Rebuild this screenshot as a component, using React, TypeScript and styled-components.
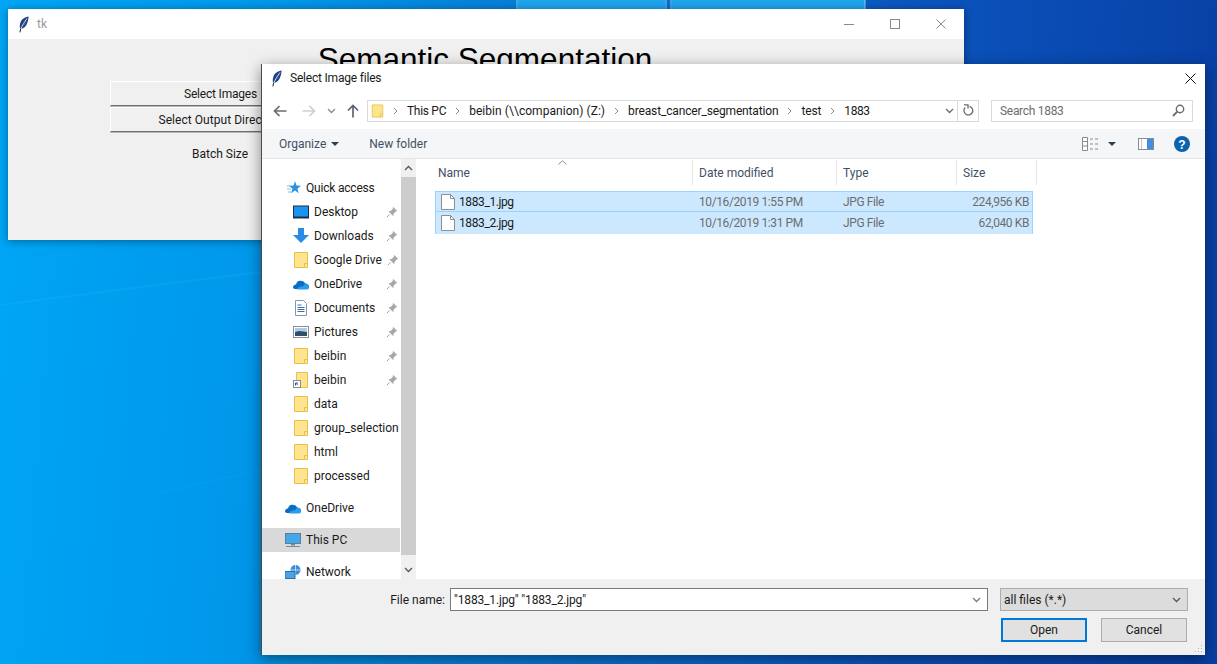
import React from "react";
import styled, { createGlobalStyle } from "styled-components";

const GlobalStyle = createGlobalStyle`
  html, body {
    margin: 0;
    padding: 0;
    overflow: hidden;
  }
  * {
    box-sizing: border-box;
  }
`;

const color = {
  text: "#1a1a1a",
  muted: "#6d6d6d",
  slate: "#3f4f66",
  folder: "#fde48f",
  folderEdge: "#e8c04e",
  blue: "#2a8ae6",
};

const Desktop = styled.div`
  position: relative;
  width: 1217px;
  height: 664px;
  overflow: hidden;
  font-family: "Roboto", "Open Sans", sans-serif;
  font-size: 12px;
  color: ${color.text};
  background: linear-gradient(
    95deg,
    #00a6f6 0%,
    #0098ea 21%,
    #0a72cf 50%,
    #0a52bb 75%,
    #083ea2 100%
  );
`;

const Wallpaper = styled.svg`
  position: absolute;
  left: 0;
  top: 0;
`;

const TkWindow = styled.div`
  position: absolute;
  left: 8px;
  top: 9px;
  width: 956px;
  height: 231px;
  background: #f0f0f0;
  box-shadow: 0 1px 8px rgba(0, 0, 0, 0.4);
  display: flex;
  flex-direction: column;
`;

const TkTitleBar = styled.div`
  height: 30px;
  flex: none;
  background: #fff;
  display: flex;
  align-items: center;
  padding-left: 10px;
`;

const TkCaption = styled.span`
  margin-left: 7px;
  color: #9a9a9a;
`;

const WindowControls = styled.div`
  margin-left: auto;
  display: flex;
`;

const WindowControl = styled.div`
  width: 46px;
  height: 30px;
  display: flex;
  align-items: center;
  justify-content: center;
`;

const TkBody = styled.div`
  flex: 1;
  display: flex;
  flex-direction: column;
`;

const TkHeading = styled.div`
  height: 42px;
  padding: 4px 2px 0 0;
  text-align: center;
  font-family: "Liberation Sans", sans-serif;
  font-size: 31.5px;
  line-height: 33px;
  color: #000;
  white-space: nowrap;
`;

const TkButton = styled.div<{ $tracking: number }>`
  width: 220px;
  height: 25px;
  margin-left: 102px;
  margin-bottom: 1px;
  display: flex;
  align-items: center;
  justify-content: center;
  white-space: nowrap;
  letter-spacing: ${(p) => p.$tracking}px;
  background: #f0f0f0;
  border-top: 1px solid #fff;
  border-left: 1px solid #fff;
  border-bottom: 1px solid #6e6e6e;
  box-shadow: 0 1px 0 #b8b8b8;
`;

const TkLabel = styled.div`
  width: 220px;
  margin-left: 102px;
  margin-top: 14px;
  text-align: center;
`;

const Dialog = styled.div`
  position: absolute;
  left: 261px;
  top: 64px;
  width: 944px;
  height: 591px;
  background: #fff;
  border-left: 1px solid #4a4a4a;
  box-shadow: 0 4px 14px rgba(0, 0, 0, 0.45);
  display: flex;
  flex-direction: column;
`;

const DialogTitleBar = styled.div`
  height: 28px;
  flex: none;
  display: flex;
  align-items: center;
  padding-left: 9px;
`;

const DialogCaption = styled.span`
  margin-left: 7px;
  letter-spacing: -0.2px;
`;

const CloseButton = styled.div`
  margin-left: auto;
  margin-right: 9px;
  display: flex;
`;

const NavBar = styled.div`
  height: 37px;
  flex: none;
  display: flex;
  align-items: center;
  padding-right: 12px;
`;

const NavButtons = styled.div`
  width: 105px;
  flex: none;
  display: flex;
  align-items: center;
`;

const NavButton = styled.div<{ $width: number }>`
  width: ${(p) => p.$width}px;
  flex: none;
  display: flex;
  justify-content: center;
`;

const AddressBar = styled.div`
  width: 612px;
  height: 22px;
  flex: none;
  border: 1px solid #d9d9d9;
  display: flex;
  align-items: center;
  padding-left: 3px;
`;

const AddressFolder = styled.span`
  width: 13px;
  flex: none;
  display: flex;
`;

const Crumb = styled.span<{ $tracking: number }>`
  white-space: nowrap;
  letter-spacing: ${(p) => p.$tracking}px;
`;

const CrumbSep = styled.span`
  display: flex;
  justify-content: center;
  width: 23px;
  flex: none;
`;

const AddressTail = styled.div`
  margin-left: auto;
  height: 100%;
  display: flex;
  align-items: center;
`;

const RefreshBox = styled.div`
  width: 21px;
  height: 100%;
  margin-left: 3px;
  border-left: 1px solid #d9d9d9;
  display: flex;
  align-items: center;
  justify-content: center;
`;

const SearchBox = styled.div`
  width: 202px;
  height: 22px;
  flex: none;
  margin-left: 12px;
  border: 1px solid #d9d9d9;
  display: flex;
  align-items: center;
  justify-content: space-between;
  padding: 0 7px 0 8px;
  color: ${color.muted};
  letter-spacing: -0.3px;
`;

const CommandBar = styled.div`
  height: 30px;
  flex: none;
  background: #f5f6f7;
  border-bottom: 1px solid #e6e6e6;
  display: flex;
  align-items: center;
  padding: 0 15px 0 17px;
  color: ${color.slate};
`;

const CommandItem = styled.span`
  display: flex;
  align-items: center;
  gap: 5px;
  margin-right: 30px;
`;

const CommandIcons = styled.div`
  margin-left: auto;
  display: flex;
  align-items: center;
`;

const IconGap = styled.span<{ $width: number }>`
  width: ${(p) => p.$width}px;
  flex: none;
`;

const Main = styled.div`
  flex: 1;
  min-height: 0;
  display: flex;
  overflow: hidden;
`;

const Sidebar = styled.div`
  width: 138px;
  flex: none;
  padding-top: 17px;
`;

const NavRow = styled.div<{ $indent: number; $active?: boolean; $gap?: number }>`
  height: 24px;
  margin-top: ${(p) => p.$gap || 0}px;
  display: flex;
  align-items: center;
  gap: 5px;
  padding-left: ${(p) => p.$indent}px;
  white-space: nowrap;
  background: ${(p) => (p.$active ? "#d9d9d9" : "transparent")};
`;

const QuickLabel = styled.span`
  letter-spacing: -0.2px;
`;

const NavIcon = styled.span`
  width: 16px;
  height: 16px;
  flex: none;
  display: flex;
`;

const PinSlot = styled.span`
  margin-left: auto;
  width: 16px;
  display: flex;
  justify-content: center;
`;

const Scrollbar = styled.div`
  width: 15px;
  flex: none;
  margin-left: 1px;
  background: #f0f0f0;
  display: flex;
  flex-direction: column;
  justify-content: space-between;
`;

const ScrollArrow = styled.div`
  height: 18px;
  flex: none;
  display: flex;
  align-items: center;
  justify-content: center;
`;

const ScrollThumb = styled.div`
  height: 378px;
  flex: none;
  margin-bottom: auto;
  background: #cdcdcd;
`;

const FileList = styled.div`
  flex: 1;
  min-width: 0;
  padding: 1px 0 0 19px;
`;

const ColumnHeader = styled.div`
  position: relative;
  height: 25px;
  display: flex;
`;

const HeaderCell = styled.div<{ $width: number; $pad: number }>`
  width: ${(p) => p.$width}px;
  flex: none;
  display: flex;
  align-items: center;
  padding-left: ${(p) => p.$pad}px;
  padding-top: 1px;
  color: ${color.slate};
  border-right: 1px solid #e5e5e5;
`;

const SortCaret = styled.svg`
  position: absolute;
  left: 123px;
  top: 0;
`;

const Rows = styled.div`
  margin-top: 6px;
  width: 598px;
`;

const FileRow = styled.div<{ $first?: boolean }>`
  height: ${(p) => (p.$first ? 21 : 22)}px;
  display: flex;
  align-items: center;
  background: #cce8ff;
  border: 1px solid #99d1ff;
  border-bottom-color: ${(p) => (p.$first ? "#99d1ff" : "#cce8ff")};
  border-top-width: ${(p) => (p.$first ? 1 : 0)}px;
  letter-spacing: -0.4px;
`;

const FileName = styled.div`
  width: 263px;
  flex: none;
  display: flex;
  align-items: center;
  gap: 4px;
  padding-left: 5px;
`;

const FileMeta = styled.div<{ $width: number; $right?: boolean }>`
  width: ${(p) => p.$width}px;
  flex: none;
  color: ${color.muted};
  text-align: ${(p) => (p.$right ? "right" : "left")};
  padding-right: ${(p) => (p.$right ? 3 : 0)}px;
`;

const Footer = styled.div`
  height: 76px;
  flex: none;
  background: #f0f0f0;
  position: relative;
  padding: 9px 17px 0 0;
`;

const FieldRow = styled.div`
  display: flex;
  align-items: center;
  height: 23px;
`;

const FieldLabel = styled.label`
  width: 183px;
  flex: none;
  text-align: right;
  margin-right: 5px;
`;

const NameInput = styled.div`
  width: 538px;
  height: 23px;
  flex: none;
  background: #fff;
  border: 1px solid #7a7a7a;
  display: flex;
  align-items: center;
  justify-content: space-between;
  padding: 0 6px 0 3px;
  letter-spacing: -0.15px;
`;

const TypeSelect = styled.div`
  width: 188px;
  height: 23px;
  flex: none;
  margin-left: 12px;
  background: #dcdcdc;
  border: 1px solid #adadad;
  display: flex;
  align-items: center;
  justify-content: space-between;
  padding: 0 6px 0 3px;
`;

const ButtonRow = styled.div`
  display: flex;
  justify-content: flex-end;
  gap: 14px;
  margin-top: 7px;
  padding-right: 1px;
`;

const DialogButton = styled.div<{ $primary?: boolean }>`
  width: 86px;
  height: 24px;
  display: flex;
  align-items: center;
  justify-content: center;
  background: #e1e1e1;
  border: ${(p) => (p.$primary ? "2px solid #0078d7" : "1px solid #adadad")};
`;

const Grip = styled.svg`
  position: absolute;
  right: 2px;
  bottom: 2px;
`;

const Feather = () => (
  <svg width="12" height="17" viewBox="0 0 12 17">
    <path d="M10.6.6C7 1 3.5 3.2 2.3 7c-.7 2.2-.7 4.2-.1 6l1.5-.2c2.4-.6 4.2-2.4 5.3-5 .9-2.2 1.5-4.8 1.6-7.2z" fill="#24407e" />
    <path d="M9 2.5C6.6 5.5 4.2 9.500 2.600 13.400" stroke="#d3def2" strokeWidth="1" fill="none" />
    <path d="M8.500 5 6 6M7.500 7.500 5 8.500" stroke="#7d97cf" strokeWidth=".7" fill="none" />
    <path d="M2.600 13 1.900 16.400" stroke="#222" strokeWidth="1" fill="none" />
  </svg>
);

const Folder = () => (
  <svg width="16" height="16" viewBox="0 0 16 16">
    <path d="M1.500.5h13v15h-13z" fill={color.folder} stroke={color.folderEdge} />
    <path d="M11.500 15.500v-4h3" fill="none" stroke={color.folderEdge} />
  </svg>
);

const FolderShortcut = () => (
  <svg width="16" height="16" viewBox="0 0 16 16">
    <path d="M3.500.5h11v15h-11z" fill={color.folder} stroke={color.folderEdge} />
    <rect x=".5" y="8.500" width="7" height="7" fill="#fff" stroke="#8a8a8a" />
    <path d="M2.500 13.500V11H5M2.800 11.200l2 2" stroke="#1f4fa0" fill="none" />
  </svg>
);

const Star = () => (
  <svg width="16" height="16" viewBox="0 0 16 16">
    <path d="M10 1l1.500 4.500 4.500.3-3.600 2.900 1.300 4.600-3.700-2.700-3.900 2.700 1.400-4.600-3.500-2.900 4.600-.3z" fill="#2a93de" />
    <path d="M2 6h3M2 9h4M3 12h3" stroke="#7cc1ef" />
  </svg>
);

const DesktopIcon = () => (
  <svg width="16" height="16" viewBox="0 0 16 16">
    <rect y="1.500" width="16" height="13" fill="#1e2f46" />
    <rect x="1" y="2.500" width="14" height="10" fill="#1b93f0" />
  </svg>
);

const Downloads = () => (
  <svg width="16" height="16" viewBox="0 0 16 16">
    <path d="M5 0h6v7h5l-8 8-8-8h5z" fill={color.blue} />
  </svg>
);

const Cloud = () => (
  <svg width="16" height="16" viewBox="0 0 16 16">
    <path d="M0 11.500c0-2 1.500-3 3-3 .6-3 3-4.500 5.500-3.500 1.500-.3 3 .8 3.500 2.500 2.500 0 4 1.500 4 3.200 0 1.300-1 2.300-2 2.300H2c-1.200 0-2-.9-2-1.500z" fill="#0a6cc4" />
    <path d="M4 13.500c0-1.500 2-3 4-3 3 0 3-2 4-3 2.500 0 4 1.500 4 3.200 0 1.300-1 2.800-2 2.800z" fill="#2a9cf0" />
  </svg>
);

const Documents = () => (
  <svg width="16" height="16" viewBox="0 0 16 16">
    <path d="M2.500.5h8l3 3v12h-11z" fill="#fff" stroke="#8898a8" />
    <path d="M4.500 5h4M4.500 7.500h7M4.500 9.500h7M4.500 11.500h7" stroke="#3a6ea8" />
  </svg>
);

const Pictures = () => (
  <svg width="16" height="16" viewBox="0 0 16 16">
    <rect x=".5" y="2.500" width="15" height="11" fill="#fff" stroke="#8a8f96" />
    <rect x="2" y="4" width="12" height="4" fill="#a9cdea" />
    <path d="M2 8l4-1 8 1v4H2z" fill="#2f5068" />
  </svg>
);

const Computer = () => (
  <svg width="16" height="16" viewBox="0 0 16 16">
    <rect x=".5" y="1.500" width="15" height="10" fill="#46a6ea" stroke="#5a7f9c" />
    <path d="M6 12h4v1.500H6z" fill="#7a8a98" />
    <path d="M1 14.500h14" stroke="#7c8b99" />
  </svg>
);

const Network = () => (
  <svg width="16" height="16" viewBox="0 0 16 16">
    <circle cx="10.500" cy="6" r="5" fill="#3c8fd8" />
    <path d="M10.500 1v10M5.500 6h10" stroke="#cfe6f7" strokeWidth=".8" />
    <rect y="7.500" width="10" height="7" fill="#4aa3e6" stroke="#2f6ea8" />
  </svg>
);

const Pin = () => (
  <svg width="12" height="12" viewBox="0 0 12 12">
    <path d="M7 .8 11.200 5l-1.400.6-2.300 2.300-.2 2.300-5-5 2.300-.2 2.300-2.300z" fill="#a8a8a8" />
    <path d="M3.500 8.500.8 11.200" stroke="#a8a8a8" />
  </svg>
);

const ChevronIcon = styled.svg`
  flex: none;
`;

const Chevron = ({ up, stroke = "#555" }: { up?: boolean; stroke?: string }) => (
  <ChevronIcon width="9" height="6" viewBox="0 0 9 6">
    <path d={up ? "M1 5l3.500-3.500L8 5" : "M1 1l3.500 3.500L8 1"} fill="none" stroke={stroke} strokeWidth="1.300" />
  </ChevronIcon>
);

const CrumbChevron = () => (
  <svg width="5" height="8" viewBox="0 0 5 8">
    <path d="M1 1l3 3-3 3" fill="none" stroke="#888" />
  </svg>
);

const Caret = () => (
  <svg width="8" height="4" viewBox="0 0 8 4">
    <path d="M0 0h8L4 4z" fill="#2f3f55" />
  </svg>
);

const ArrowLeft = ({ fill }: { fill: string }) => (
  <svg width="14" height="12" viewBox="0 0 14 12">
    <path d="M13.500 6H2M6.500 1l-5 5 5 5" fill="none" stroke={fill} strokeWidth="1.700" />
  </svg>
);

const ArrowRight = ({ fill }: { fill: string }) => (
  <svg width="14" height="12" viewBox="0 0 14 12">
    <path d="M.5 6H12M7.500 1l5 5-5 5" fill="none" stroke={fill} strokeWidth="1.700" />
  </svg>
);

const ArrowUp = () => (
  <svg width="12" height="14" viewBox="0 0 12 14">
    <path d="M6 13.500V2M1 6.500l5-5 5 5" fill="none" stroke="#5a6472" strokeWidth="1.700" />
  </svg>
);

const Refresh = () => (
  <svg width="12" height="13" viewBox="0 0 12 13">
    <path d="M7.500 2.300A4.400 4.400 0 1 1 3.200 3.500" fill="none" stroke="#6b6b6b" strokeWidth="1.300" />
    <path d="M2 .8h4v3.700" fill="none" stroke="#6b6b6b" strokeWidth="1.300" />
  </svg>
);

const Magnifier = () => (
  <svg width="13" height="13" viewBox="0 0 13 13">
    <circle cx="8" cy="5" r="3.700" fill="none" stroke="#6b6b6b" strokeWidth="1.400" />
    <path d="M5.300 7.700 1 12" stroke="#6b6b6b" strokeWidth="1.800" />
  </svg>
);

const ViewIcon = () => (
  <svg width="17" height="14" viewBox="0 0 17 14">
    <path d="M.5.5h5v13h-5zM.5 4.500h5M.5 9h5" fill="#fff" stroke="#8b8b8b" />
    <path d="M8 2h3M13 2h3M8 7h3M13 7h3M8 12h3M13 12h3" stroke="#8b8b8b" />
  </svg>
);

const PaneIcon = () => (
  <svg width="16" height="12" viewBox="0 0 16 12">
    <rect x=".5" y=".5" width="15" height="11" fill="#fff" stroke="#8a8a8a" />
    <rect x="3" y="1" width="1" height="10" fill="#c8c8c8" />
    <rect x="9" y="1" width="6" height="10" fill="#3f8fdc" />
  </svg>
);

const HelpIcon = () => (
  <svg width="16" height="16" viewBox="0 0 16 16">
    <circle cx="8" cy="8" r="8" fill="#0c63ad" />
    <text x="8" y="12.500" textAnchor="middle" fontFamily="Liberation Sans" fontWeight="700" fontSize="12" fill="#fff">?</text>
  </svg>
);

const FileIcon = () => (
  <svg width="14" height="16" viewBox="0 0 14 16">
    <path d="M.5.5h9l4 4v11H.5z" fill="#fff" stroke="#8f8f8f" />
    <path d="M9.500.5v4h4" fill="none" stroke="#8f8f8f" />
  </svg>
);

const CloseGlyph = ({ size, stroke }: { size: number; stroke: string }) => (
  <svg width={size} height={size} viewBox={`0 0 ${size} ${size}`}>
    <path d={`M.5.5 ${size - 0.5} ${size - 0.5}M${size - 0.5} .5 .5 ${size - 0.5}`} stroke={stroke} fill="none" />
  </svg>
);

const quickLinks: { label: string; icon: React.ReactNode; pinned?: boolean }[] = [
  { label: "Desktop", icon: <DesktopIcon />, pinned: true },
  { label: "Downloads", icon: <Downloads />, pinned: true },
  { label: "Google Drive", icon: <Folder />, pinned: true },
  { label: "OneDrive", icon: <Cloud />, pinned: true },
  { label: "Documents", icon: <Documents />, pinned: true },
  { label: "Pictures", icon: <Pictures />, pinned: true },
  { label: "beibin", icon: <Folder />, pinned: true },
  { label: "beibin", icon: <FolderShortcut />, pinned: true },
  { label: "data", icon: <Folder /> },
  { label: "group_selection", icon: <Folder /> },
  { label: "html", icon: <Folder /> },
  { label: "processed", icon: <Folder /> },
];

const crumbs = [
  { label: "This PC", tracking: -0.3 },
  { label: "beibin (\\\\companion) (Z:)", tracking: 0.05 },
  { label: "breast_cancer_segmentation", tracking: -0.15 },
  { label: "test", tracking: -0.15 },
  { label: "1883", tracking: -0.4 },
];

const files = [
  { name: "1883_1.jpg", date: "10/16/2019 1:55 PM", size: "224,956 KB" },
  { name: "1883_2.jpg", date: "10/16/2019 1:31 PM", size: "62,040 KB" },
];

export default function App() {
  return (
    <Desktop>
      <GlobalStyle />
      <Wallpaper width="1217" height="664" viewBox="0 0 1217 664">
        <path d="M518 0h147v9H518zM672 0h193v9H672z" fill="#1fa4ee" />
        <path d="M517 0v9M666 0v9M671 0v9M865 0v9" stroke="#7fd0f7" />
        <path d="M0 305 261 272" stroke="#3cc0ff" strokeWidth="2" opacity=".15" />
        <path d="M150 495 261 470" stroke="#3cb8ff" strokeWidth="2" opacity=".08" />
      </Wallpaper>

      <TkWindow>
        <TkTitleBar>
          <Feather />
          <TkCaption>tk</TkCaption>
          <WindowControls>
            <WindowControl>
              <svg width="10" height="10" viewBox="0 0 10 10">
                <path d="M0 5.500h10" stroke="#8a8a8a" />
              </svg>
            </WindowControl>
            <WindowControl>
              <svg width="10" height="10" viewBox="0 0 10 10">
                <rect x=".5" y=".5" width="9" height="9" fill="none" stroke="#8a8a8a" />
              </svg>
            </WindowControl>
            <WindowControl>
              <CloseGlyph size={10} stroke="#8a8a8a" />
            </WindowControl>
          </WindowControls>
        </TkTitleBar>
        <TkBody>
          <TkHeading>Semantic Segmentation</TkHeading>
          <TkButton $tracking={-0.2}>Select Images</TkButton>
          <TkButton $tracking={0.05}>Select Output Directory</TkButton>
          <TkLabel>Batch Size</TkLabel>
        </TkBody>
      </TkWindow>

      <Dialog>
        <DialogTitleBar>
          <Feather />
          <DialogCaption>Select Image files</DialogCaption>
          <CloseButton>
            <CloseGlyph size={11} stroke="#111" />
          </CloseButton>
        </DialogTitleBar>

        <NavBar>
          <NavButtons>
            <NavButton $width={36}>
              <ArrowLeft fill="#6b6b6b" />
            </NavButton>
            <NavButton $width={22}>
              <ArrowRight fill="#cfcfcf" />
            </NavButton>
            <NavButton $width={22}>
              <Chevron stroke="#8a8a8a" />
            </NavButton>
            <NavButton $width={22}>
              <ArrowUp />
            </NavButton>
          </NavButtons>
          <AddressBar>
            <AddressFolder>
              <Folder />
            </AddressFolder>
            {crumbs.map((crumb) => (
              <React.Fragment key={crumb.label}>
                <CrumbSep>
                  <CrumbChevron />
                </CrumbSep>
                <Crumb $tracking={crumb.tracking}>{crumb.label}</Crumb>
              </React.Fragment>
            ))}
            <AddressTail>
              <Chevron stroke="#6b6b6b" />
              <RefreshBox>
                <Refresh />
              </RefreshBox>
            </AddressTail>
          </AddressBar>
          <SearchBox>
            Search 1883
            <Magnifier />
          </SearchBox>
        </NavBar>

        <CommandBar>
          <CommandItem>
            Organize
            <Caret />
          </CommandItem>
          <CommandItem>New folder</CommandItem>
          <CommandIcons>
            <ViewIcon />
            <IconGap $width={9} />
            <Caret />
            <IconGap $width={22} />
            <PaneIcon />
            <IconGap $width={20} />
            <HelpIcon />
          </CommandIcons>
        </CommandBar>

        <Main>
          <Sidebar>
            <NavRow $indent={23}>
              <NavIcon>
                <Star />
              </NavIcon>
              <QuickLabel>Quick access</QuickLabel>
            </NavRow>
            {quickLinks.map((link, i) => (
              <NavRow key={link.label + i} $indent={31}>
                <NavIcon>{link.icon}</NavIcon>
                {link.label}
                {link.pinned && (
                  <PinSlot>
                    <Pin />
                  </PinSlot>
                )}
              </NavRow>
            ))}
            <NavRow $indent={23} $gap={8}>
              <NavIcon>
                <Cloud />
              </NavIcon>
              OneDrive
            </NavRow>
            <NavRow $indent={23} $gap={8} $active>
              <NavIcon>
                <Computer />
              </NavIcon>
              This PC
            </NavRow>
            <NavRow $indent={23} $gap={8}>
              <NavIcon>
                <Network />
              </NavIcon>
              Network
            </NavRow>
          </Sidebar>

          <Scrollbar>
            <ScrollArrow>
              <Chevron up />
            </ScrollArrow>
            <ScrollThumb />
            <ScrollArrow>
              <Chevron />
            </ScrollArrow>
          </Scrollbar>

          <FileList>
            <ColumnHeader>
              <SortCaret width="9" height="5" viewBox="0 0 9 5">
                <path d="M.5 4.500 4.500.8l4 3.700" fill="none" stroke="#8a8a8a" />
              </SortCaret>
              <HeaderCell $width={258} $pad={3}>Name</HeaderCell>
              <HeaderCell $width={144} $pad={6}>Date modified</HeaderCell>
              <HeaderCell $width={120} $pad={6}>Type</HeaderCell>
              <HeaderCell $width={80} $pad={6}>Size</HeaderCell>
            </ColumnHeader>
            <Rows>
              {files.map((file, i) => (
                <FileRow key={file.name} $first={i === 0}>
                  <FileName>
                    <FileIcon />
                    {file.name}
                  </FileName>
                  <FileMeta $width={144}>{file.date}</FileMeta>
                  <FileMeta $width={120}>JPG File</FileMeta>
                  <FileMeta $width={69} $right>
                    {file.size}
                  </FileMeta>
                </FileRow>
              ))}
            </Rows>
          </FileList>
        </Main>

        <Footer>
          <FieldRow>
            <FieldLabel>File name:</FieldLabel>
            <NameInput>
              "1883_1.jpg" "1883_2.jpg"
              <Chevron stroke="#7a7a7a" />
            </NameInput>
            <TypeSelect>
              all files (*.*)
              <Chevron stroke="#555" />
            </TypeSelect>
          </FieldRow>
          <ButtonRow>
            <DialogButton $primary>Open</DialogButton>
            <DialogButton>Cancel</DialogButton>
          </ButtonRow>
          <Grip width="10" height="10" viewBox="0 0 10 10">
            <path d="M8 2h1v1H8zM5 5h1v1H5zM8 5h1v1H8zM2 8h1v1H2zM5 8h1v1H5zM8 8h1v1H8z" fill="#b5b5b5" />
          </Grip>
        </Footer>
      </Dialog>
    </Desktop>
  );
}
